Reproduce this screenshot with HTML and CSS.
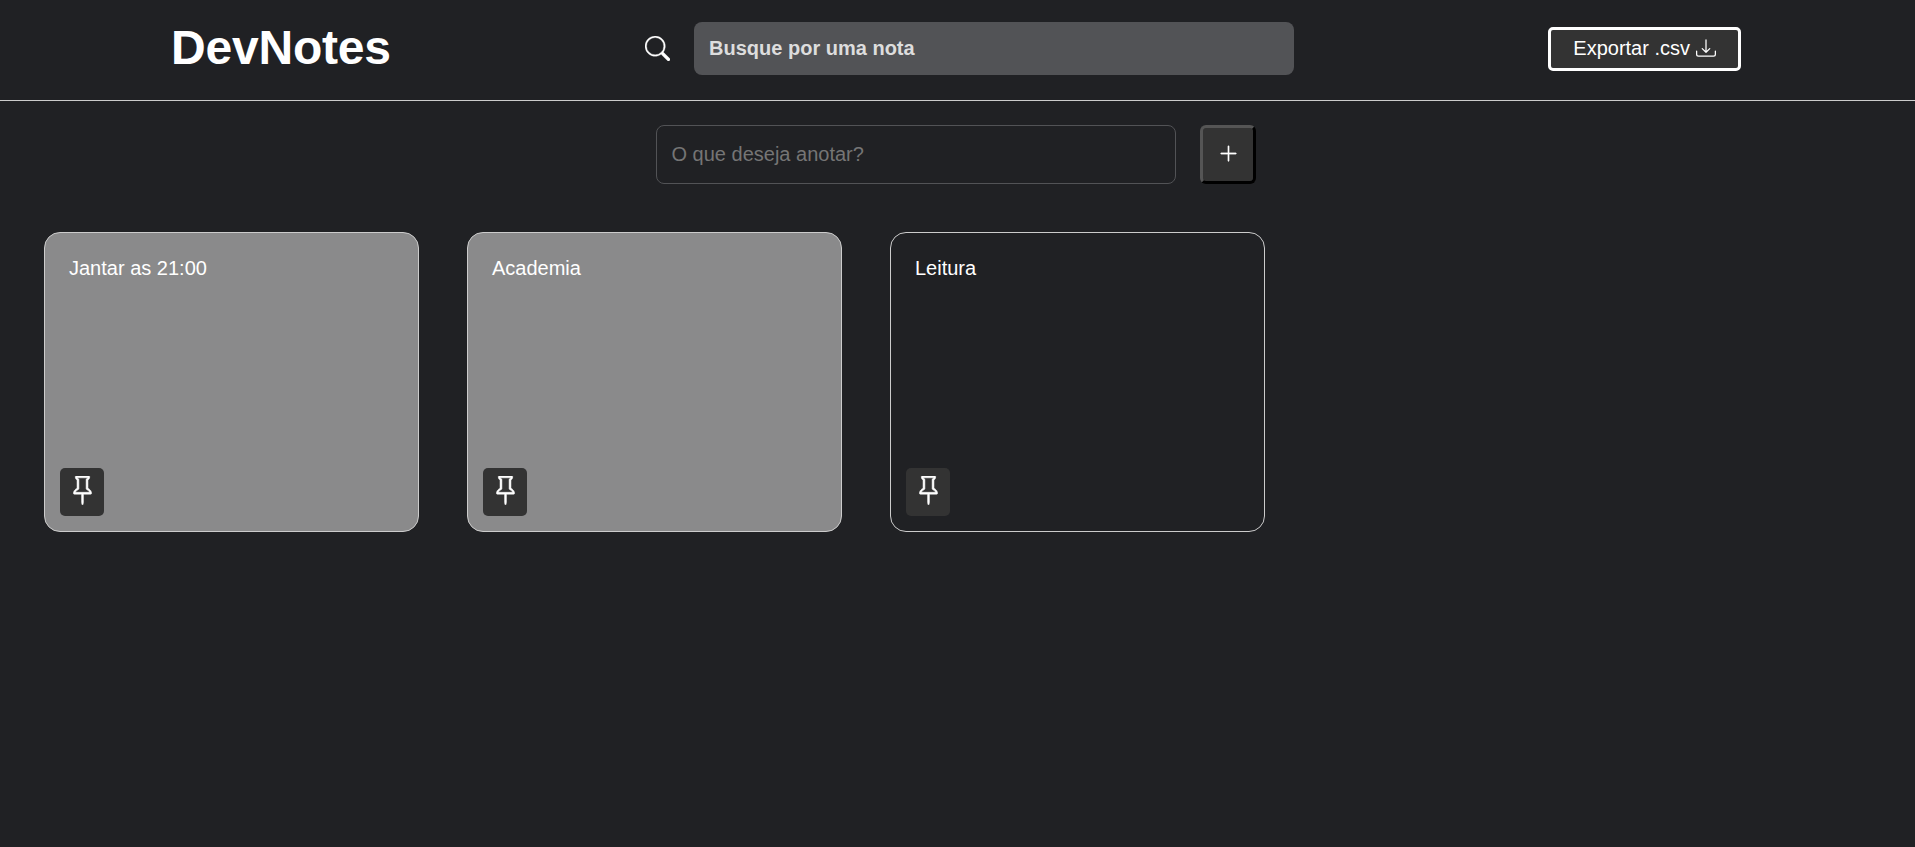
FILE: index.html
```html
<!DOCTYPE html>
<html lang="pt-BR">
<head>
	<meta charset="UTF-8">
	<meta name="viewport" content="width=device-width, initial-scale=1.0">
	<title>DevNotes</title>
	<link rel="stylesheet" href="styles.css">
</head>
<body>
	<header class="topbar">
		<h1 class="logo">DevNotes</h1>
		<div class="search-box">
			<svg class="search-icon" viewBox="0 0 16 16" fill="currentColor"><path d="M11.742 10.344a6.5 6.5 0 1 0-1.397 1.398h-.001c.03.04.062.078.098.115l3.85 3.85a1 1 0 0 0 1.415-1.414l-3.85-3.85a1.007 1.007 0 0 0-.115-.1zM12 6.5a5.5 5.5 0 1 1-11 0 5.5 5.5 0 0 1 11 0z"/></svg>
			<input type="text" class="search-input" placeholder="Busque por uma nota">
		</div>
		<button type="button" class="export-button">Exportar .csv
			<svg class="export-icon" viewBox="0 0 16 16" fill="currentColor"><path d="M.5 9.9a.5.5 0 0 1 .5.5v2.5a1 1 0 0 0 1 1h12a1 1 0 0 0 1-1v-2.5a.5.5 0 0 1 1 0v2.5a2 2 0 0 1-2 2H2a2 2 0 0 1-2-2v-2.5a.5.5 0 0 1 .5-.5z"/><path d="M7.646 11.854a.5.5 0 0 0 .708 0l3-3a.5.5 0 0 0-.708-.708L8.5 10.293V1.5a.5.5 0 0 0-1 0v8.793L5.354 8.146a.5.5 0 1 0-.708.708l3 3z"/></svg>
		</button>
	</header>

	<div class="add-note">
		<input type="text" class="add-input" placeholder="O que deseja anotar?">
		<button type="button" class="add-button">
			<svg class="add-icon" viewBox="0 0 16 16" fill="currentColor"><path d="M8 2a.5.5 0 0 1 .5.5v5h5a.5.5 0 0 1 0 1h-5v5a.5.5 0 0 1-1 0v-5h-5a.5.5 0 0 1 0-1h5v-5A.5.5 0 0 1 8 2Z"/></svg>
		</button>
	</div>

	<main class="notes">
		<div class="note note-pinned">
			<p class="note-text">Jantar as 21:00</p>
			<button type="button" class="pin-button">
				<svg class="pin-icon" viewBox="0 0 16 16" fill="currentColor"><path d="M4.146.146A.5.5 0 0 1 4.5 0h7a.5.5 0 0 1 .5.5c0 .68-.342 1.174-.646 1.479-.126.125-.25.224-.354.298v4.431l.078.048c.203.127.476.314.751.555C12.36 7.775 13 8.527 13 9.5a.5.5 0 0 1-.5.5h-4v4.5c0 .276-.224 1.5-.5 1.5s-.5-1.224-.5-1.5V10h-4a.5.5 0 0 1-.5-.5c0-.973.64-1.725 1.17-2.189A5.921 5.921 0 0 1 5 6.708V2.277a2.77 2.77 0 0 1-.354-.298C4.342 1.674 4 1.179 4 .5a.5.5 0 0 1 .146-.354zm1.58 1.408-.002-.001.002.001zm-.002-.001.002.001A.5.5 0 0 1 6 2v5a.5.5 0 0 1-.276.447h-.002l-.012.007-.054.03a4.922 4.922 0 0 0-.827.58c-.318.278-.585.596-.725.936h7.792c-.14-.34-.407-.658-.725-.936a4.915 4.915 0 0 0-.881-.61l-.012-.006h-.002A.5.5 0 0 1 10 7V2a.5.5 0 0 1 .295-.458 1.775 1.775 0 0 0 .351-.271c.08-.08.155-.17.214-.271H5.14c.06.1.133.191.214.271a1.78 1.78 0 0 0 .37.282z"/></svg>
			</button>
		</div>
		<div class="note note-pinned">
			<p class="note-text">Academia</p>
			<button type="button" class="pin-button">
				<svg class="pin-icon" viewBox="0 0 16 16" fill="currentColor"><path d="M4.146.146A.5.5 0 0 1 4.5 0h7a.5.5 0 0 1 .5.5c0 .68-.342 1.174-.646 1.479-.126.125-.25.224-.354.298v4.431l.078.048c.203.127.476.314.751.555C12.36 7.775 13 8.527 13 9.5a.5.5 0 0 1-.5.5h-4v4.5c0 .276-.224 1.5-.5 1.5s-.5-1.224-.5-1.5V10h-4a.5.5 0 0 1-.5-.5c0-.973.64-1.725 1.17-2.189A5.921 5.921 0 0 1 5 6.708V2.277a2.77 2.77 0 0 1-.354-.298C4.342 1.674 4 1.179 4 .5a.5.5 0 0 1 .146-.354zm1.58 1.408-.002-.001.002.001zm-.002-.001.002.001A.5.5 0 0 1 6 2v5a.5.5 0 0 1-.276.447h-.002l-.012.007-.054.03a4.922 4.922 0 0 0-.827.58c-.318.278-.585.596-.725.936h7.792c-.14-.34-.407-.658-.725-.936a4.915 4.915 0 0 0-.881-.61l-.012-.006h-.002A.5.5 0 0 1 10 7V2a.5.5 0 0 1 .295-.458 1.775 1.775 0 0 0 .351-.271c.08-.08.155-.17.214-.271H5.14c.06.1.133.191.214.271a1.78 1.78 0 0 0 .37.282z"/></svg>
			</button>
		</div>
		<div class="note">
			<p class="note-text">Leitura</p>
			<button type="button" class="pin-button">
				<svg class="pin-icon" viewBox="0 0 16 16" fill="currentColor"><path d="M4.146.146A.5.5 0 0 1 4.5 0h7a.5.5 0 0 1 .5.5c0 .68-.342 1.174-.646 1.479-.126.125-.25.224-.354.298v4.431l.078.048c.203.127.476.314.751.555C12.36 7.775 13 8.527 13 9.5a.5.5 0 0 1-.5.5h-4v4.5c0 .276-.224 1.5-.5 1.5s-.5-1.224-.5-1.5V10h-4a.5.5 0 0 1-.5-.5c0-.973.64-1.725 1.17-2.189A5.921 5.921 0 0 1 5 6.708V2.277a2.77 2.77 0 0 1-.354-.298C4.342 1.674 4 1.179 4 .5a.5.5 0 0 1 .146-.354zm1.58 1.408-.002-.001.002.001zm-.002-.001.002.001A.5.5 0 0 1 6 2v5a.5.5 0 0 1-.276.447h-.002l-.012.007-.054.03a4.922 4.922 0 0 0-.827.58c-.318.278-.585.596-.725.936h7.792c-.14-.34-.407-.658-.725-.936a4.915 4.915 0 0 0-.881-.61l-.012-.006h-.002A.5.5 0 0 1 10 7V2a.5.5 0 0 1 .295-.458 1.775 1.775 0 0 0 .351-.271c.08-.08.155-.17.214-.271H5.14c.06.1.133.191.214.271a1.78 1.78 0 0 0 .37.282z"/></svg>
			</button>
		</div>
	</main>
</body>
</html>
```

FILE: styles.css
```css
* {
	box-sizing: border-box;
}
html, body {
	height: 100%;
}
body {
	margin: 0;
	background: #202124;
	color: white;
	font-family: "Liberation Sans", Arial, sans-serif;
	overflow: hidden;
}
.topbar {
	display: flex;
	align-items: center;
	justify-content: space-between;
	height: 101px;
	padding: 0 174px 5px 171px;
	border-bottom: 1px solid #ccc;
}
.logo {
	margin: 0;
	font-size: 48px;
	font-weight: bold;
	letter-spacing: -0.2px;
}
.search-box {
	display: flex;
	align-items: center;
	gap: 24px;
	margin-top: 2px;
}
.search-icon {
	width: 25px;
	height: 25px;
	stroke: currentColor;
	stroke-width: 0.2;
}
.search-input {
	width: 600px;
	height: 53px;
	padding: 0 15px;
	border: none;
	border-radius: 8px;
	outline: none;
	background: #525356;
	color: white;
	font-family: inherit;
	font-size: 20px;
	font-weight: bold;
}
.search-input::placeholder {
	color: #ddd;
	opacity: 1;
}
.export-button {
	display: flex;
	align-items: center;
	gap: 6px;
	height: 44px;
	margin-top: 3px;
	padding: 0 22px 2px;
	border: 3px solid white;
	border-radius: 5px;
	background: #333;
	color: white;
	font-family: inherit;
	font-size: 20px;
}
.export-icon {
	width: 20px;
	height: 20px;
}
.add-note {
	display: flex;
	justify-content: center;
	gap: 24px;
	padding: 24px 4px 0 0;
}
.add-input {
	width: 520px;
	height: 59px;
	padding: 0 15px;
	border: 1px solid #525356;
	border-radius: 8px;
	outline: none;
	background: #202124;
	color: white;
	font-family: inherit;
	font-size: 20px;
}
.add-input::placeholder {
	color: #757575;
	opacity: 1;
}
.add-button {
	display: flex;
	align-items: center;
	justify-content: center;
	width: 56px;
	height: 59px;
	padding: 0 0 2px 1px;
	border: 3px outset #555;
	border-color: #555 #000 #000 #555;
	border-radius: 6px;
	background: #333;
	color: white;
}
.add-icon {
	width: 21px;
	height: 21px;
	stroke: currentColor;
	stroke-width: 0.25;
}
.notes {
	display: flex;
	gap: 48px;
	padding: 48px 0 0 44px;
}
.note {
	position: relative;
	width: 375px;
	height: 300px;
	padding: 24px;
	border: 1px solid #ccc;
	border-radius: 16px;
	background: #202124;
}
.note-pinned {
	background: #8a8a8b;
}
.note-text {
	margin: 0;
	font-size: 20px;
	line-height: 23px;
}
/* sits over the bottom corner of the note */
.pin-button {
	position: absolute;
	left: 15px;
	bottom: 15px;
	display: flex;
	align-items: center;
	justify-content: center;
	width: 44px;
	height: 48px;
	padding: 0 0 3px;
	border: none;
	border-radius: 5px;
	background: #333;
	color: white;
}
.pin-icon {
	width: 29px;
	height: 29px;
	stroke: currentColor;
	stroke-width: 0.3;
}
```
